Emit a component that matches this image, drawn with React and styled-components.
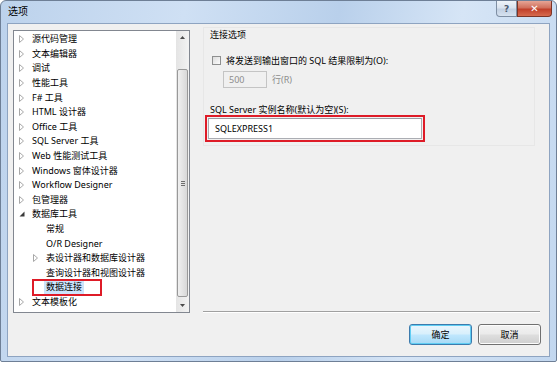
import React from 'react'
import styled, { createGlobalStyle } from 'styled-components'

const GlobalStyle = createGlobalStyle`
  html, body {
    margin: 0;
    padding: 0;
    background: #fff;
  }
  body {
    font-family: "Segoe UI", "Noto Sans", "Noto Sans CJK SC", sans-serif;
    font-size: 9px;
    color: #000;
  }
`

const Window = styled.div`
  width: 557px;
  height: 362px;
  box-sizing: border-box;
  border: 1px solid #6e7f96;
  border-radius: 6px 6px 2px 2px;
  background: linear-gradient(100deg, #bcd2ec 0%, #cfe0f4 30%, #b9d0eb 55%, #d6e5f6 75%, #c2d7ef 100%);
  display: flex;
  flex-direction: column;
  overflow: hidden;
`

const TitleBar = styled.div`
  height: 22px;
  display: flex;
  align-items: flex-start;
  padding: 0 4px 0 7px;
`

const Title = styled.div`
  font-size: 10px;
  line-height: 20px;
`

const Caption = styled.div`
  margin-left: auto;
  display: flex;
`

const CaptionButton = styled.div`
  height: 16px;
  width: ${p => (p.close ? 35 : 21)}px;
  box-sizing: border-box;
  border: 1px solid ${p => (p.close ? '#7c3426' : '#7e8ea3')};
  border-top: none;
  border-radius: ${p => (p.close ? '0 0 4px 0' : '0 0 0 4px')};
  background: ${p =>
    p.close
      ? 'linear-gradient(180deg, #e6a595 0%, #d0705c 45%, #c0402a 55%, #d76b4f 100%)'
      : 'linear-gradient(180deg, #eef3f9 0%, #d9e3ef 45%, #c2d0e2 55%, #d6e2f0 100%)'};
  color: ${p => (p.close ? '#fff' : '#4a5a70')};
  font-weight: bold;
  font-size: ${p => (p.close ? 10 : 9)}px;
  display: flex;
  align-items: center;
  justify-content: center;
  font-family: "DejaVu Sans", sans-serif;
`

const Client = styled.div`
  flex: 1;
  margin: 0 6px 4px 6px;
  border: 1px solid #8ea4c1;
  background: #f0f0f0;
  display: flex;
  flex-direction: column;
`

const Main = styled.div`
  display: flex;
  padding: 6px 0 0 5px;
`

const Tree = styled.div`
  width: 177px;
  height: 283px;
  box-sizing: border-box;
  border: 1px solid #828790;
  background: #fff;
  display: flex;
`

const RowList = styled.div`
  flex: 1;
  padding-top: 1px;
  overflow: hidden;
`

const Row = styled.div`
  height: 14.6px;
  display: flex;
  align-items: center;
  padding-left: ${p => 5 + p.level * 14}px;
  white-space: nowrap;
`

const ArrowSlot = styled.span`
  width: 13px;
  flex: none;
  display: flex;
  align-items: center;
`

const Label = styled.span`
  padding: 0 2px;
  margin-left: -2px;
  line-height: 14px;
  background: ${p => (p.selected ? '#cce4fb' : 'transparent')};
  position: relative;
  &::after {
    content: '';
    display: ${p => (p.marked ? 'block' : 'none')};
    position: absolute;
    left: -12px;
    right: -18px;
    top: -1px;
    bottom: -2px;
    border: 2px solid #de1b27;
  }
`

const Scrollbar = styled.div`
  width: 13px;
  flex: none;
  background: linear-gradient(90deg, #e4e4e4, #f3f3f3);
  display: flex;
  flex-direction: column;
  align-items: center;
`

const ScrollArrow = styled.div`
  height: 13px;
  display: flex;
  align-items: center;
  justify-content: center;
`

const Thumb = styled.div`
  width: 11px;
  height: 228px;
  box-sizing: border-box;
  margin-top: ${p => p.offset}px;
  border: 1px solid #999;
  border-radius: 2px;
  background: linear-gradient(90deg, #f0f0f0, #d8d8d8);
  display: flex;
  align-items: center;
  justify-content: center;
`

const Grip = styled.div`
  width: 4px;
  height: 5px;
  background: repeating-linear-gradient(180deg, #6e6e6e 0 1px, transparent 1px 2px);
`

const Spacer = styled.div`
  flex: 1;
`

const RightCol = styled.div`
  flex: 1;
  margin: 0 9px 0 13px;
  display: flex;
  flex-direction: column;
`

const Panel = styled.div`
  margin: -3px 5px 0 0;
  height: 119px;
  box-sizing: border-box;
  border: 1px solid #e7e7e7;
  padding-left: 6px;
  display: flex;
  flex-direction: column;
  align-items: flex-start;
`

const Text = styled.div`
  line-height: 12px;
  margin-top: ${p => p.top || 0}px;
  color: ${p => (p.disabled ? '#8d8d8d' : '#000')};
`

const CheckRow = styled.label`
  display: flex;
  align-items: center;
  margin: 13px 0 0 2px;
  height: 12px;
`

const Check = styled.span`
  width: 9px;
  height: 9px;
  box-sizing: border-box;
  border: 1px solid #8e8f8f;
  background: linear-gradient(135deg, #dcdcdc, #fbfbfb);
  margin-right: 5px;
`

const NumberRow = styled.div`
  display: flex;
  align-items: center;
  margin: 5px 0 0 13px;
`

const SmallBox = styled.div`
  width: 44px;
  height: 17px;
  box-sizing: border-box;
  border: 1px solid #c4c4c4;
  background: #f0f0f0;
  color: #8d8d8d;
  padding-left: 5px;
  line-height: 15px;
  margin-right: 5px;
`

const Marked = styled.div`
  margin: -1px 0 0 -5px;
  width: 220px;
  height: 27px;
  box-sizing: border-box;
  border: 2px solid #de1b27;
  padding: 1px;
`

const TextBox = styled.div`
  height: 100%;
  box-sizing: border-box;
  border: 1px solid #abadb3;
  border-top-color: #9a9ca3;
  background: #fff;
  padding-left: 6px;
  display: flex;
  align-items: center;
`

const Separator = styled.div`
  border-top: 1px solid #a0a0a0;
  border-bottom: 1px solid #fff;
`

const Footer = styled.div`
  display: flex;
  justify-content: flex-end;
  gap: 6px;
  margin-top: 11px;
  padding: 0 8px 11px 0;
`

const Button = styled.div`
  width: 63px;
  height: 21px;
  box-sizing: border-box;
  border: 1px solid ${p => (p.primary ? '#3d7bad' : '#707070')};
  border-radius: 3px;
  background: ${p =>
    p.primary
      ? 'linear-gradient(180deg, #eaf6fd 0%, #d9f0fc 45%, #bee6fd 55%, #a7d9f5 100%)'
      : 'linear-gradient(180deg, #f2f2f2 0%, #ebebeb 45%, #dddddd 55%, #cfcfcf 100%)'};
  box-shadow: inset 0 0 0 1px ${p => (p.primary ? '#5fcdf3' : '#fcfcfc')};
  display: flex;
  align-items: center;
  justify-content: center;
`

const Collapsed = () => (
  <svg width="5" height="8" viewBox="0 0 5 8">
    <path d="M0.5 0.5 L4.5 4 L0.5 7.5 Z" fill="none" stroke="#a8a8a8" strokeWidth="1" />
  </svg>
)

const Expanded = () => (
  <svg width="6" height="6" viewBox="0 0 6 6">
    <path d="M5.5 0.5 L5.5 5.5 L0.5 5.5 Z" fill="#3a3a3a" />
  </svg>
)

const Tiny = ({ up }) => (
  <svg width="5" height="3" viewBox="0 0 5 3">
    <path d={up ? 'M0 3 L2.5 0 L5 3 Z' : 'M0 0 L2.5 3 L5 0 Z'} fill="#4b4b4b" />
  </svg>
)

const items = [
  { text: '源代码管理', arrow: 'c' },
  { text: '文本编辑器', arrow: 'c' },
  { text: '调试', arrow: 'c' },
  { text: '性能工具', arrow: 'c' },
  { text: 'F# 工具', arrow: 'c' },
  { text: 'HTML 设计器', arrow: 'c' },
  { text: 'Office 工具', arrow: 'c' },
  { text: 'SQL Server 工具', arrow: 'c' },
  { text: 'Web 性能测试工具', arrow: 'c' },
  { text: 'Windows 窗体设计器', arrow: 'c' },
  { text: 'Workflow Designer', arrow: 'c' },
  { text: '包管理器', arrow: 'c' },
  { text: '数据库工具', arrow: 'e' },
  { text: '常规', level: 1 },
  { text: 'O/R Designer', level: 1 },
  { text: '表设计器和数据库设计器', level: 1, arrow: 'c' },
  { text: '查询设计器和视图设计器', level: 1 },
  { text: '数据连接', level: 1, selected: true },
  { text: '文本模板化', arrow: 'c' },
]

const App = () => (
  <>
    <GlobalStyle />
    <Window>
      <TitleBar>
        <Title>选项</Title>
        <Caption>
          <CaptionButton>?</CaptionButton>
          <CaptionButton close>✕</CaptionButton>
        </Caption>
      </TitleBar>
      <Client>
        <Main>
          <Tree>
            <RowList>
              {items.map(item => (
                <Row key={item.text} level={item.level || 0}>
                  <ArrowSlot>
                    {item.arrow === 'c' && <Collapsed />}
                    {item.arrow === 'e' && <Expanded />}
                  </ArrowSlot>
                  <Label selected={item.selected} marked={item.selected}>
                    {item.text}
                  </Label>
                </Row>
              ))}
            </RowList>
            <Scrollbar>
              <ScrollArrow>
                <Tiny up />
              </ScrollArrow>
              <Thumb offset={25}>
                <Grip />
              </Thumb>
              <Spacer />
              <ScrollArrow>
                <Tiny />
              </ScrollArrow>
            </Scrollbar>
          </Tree>
          <RightCol>
            <Panel>
              <Text top={1}>连接选项</Text>
              <CheckRow>
                <Check />
                将发送到输出窗口的 SQL 结果限制为(O):
              </CheckRow>
              <NumberRow>
                <SmallBox>500</SmallBox>
                <Text disabled>行(R)</Text>
              </NumberRow>
              <Text top={16}>SQL Server 实例名称(默认为空)(S):</Text>
              <Marked>
                <TextBox>SQLEXPRESS1</TextBox>
              </Marked>
            </Panel>
            <Spacer />
            <Separator />
          </RightCol>
        </Main>
        <Footer>
          <Button primary>确定</Button>
          <Button>取消</Button>
        </Footer>
      </Client>
    </Window>
  </>
)

export default App
